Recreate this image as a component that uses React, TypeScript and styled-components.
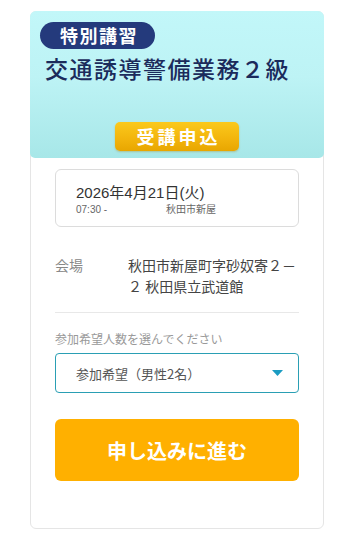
import React from "react";
import styled, { createGlobalStyle } from "styled-components";

const Global = createGlobalStyle`
  html, body { margin: 0; padding: 0; background: #fff; }
  body { font-family: "Liberation Sans", "Noto Sans CJK JP", sans-serif; }
`;

const Page = styled.div`
  padding: 11px 21px 12px 30px;
`;

const Card = styled.div`
  width: 292px;
  border: 1px solid #e5e5e5;
  border-radius: 6px;
  background: #fff;
  padding-bottom: 47px;
`;

const Header = styled.div`
  margin: -1px -1px 0;
  height: 147px;
  box-sizing: border-box;
  border-radius: 6px 6px 5px 5px;
  background: linear-gradient(180deg, #c2f7f9 0%, #bdf3f5 45%, #a7e7e8 100%);
  padding: 11px 0 7px 10px;
  display: flex;
  flex-direction: column;
  align-items: flex-start;
`;

const Badge = styled.div`
  height: 27px;
  box-sizing: border-box;
  padding: 0 17px 0 20px;
  border-radius: 14px;
  background: #243a7c;
  color: #fff;
  font-family: "Noto Sans CJK JP", sans-serif;
  font-weight: 700;
  font-size: 18px;
  letter-spacing: 1.5px;
  line-height: 27px;
`;

const Title = styled.h1`
  margin: 2px 0 0 5px;
  font-family: "Noto Sans CJK JP", sans-serif;
  font-weight: 500;
  font-size: 23px;
  letter-spacing: 1.5px;
  line-height: 34px;
  color: #1b2b5c;
`;

const ApplyRow = styled.div`
  margin-top: auto;
  align-self: stretch;
  display: flex;
  justify-content: center;
  padding-right: 10px;
`;

const ApplyButton = styled.div`
  width: 124px;
  height: 29px;
  border-radius: 5px;
  background: linear-gradient(180deg, #fbc91c 0%, #f2b40c 60%, #e8a600 100%);
  box-shadow: 0 1px 2px rgba(170, 120, 0, 0.35);
  color: #fff;
  font-family: "Noto Sans CJK JP", sans-serif;
  font-weight: 700;
  font-size: 18px;
  letter-spacing: 3px;
  line-height: 29px;
  text-align: center;
  text-indent: 3px;
`;

const Body = styled.div`
  padding: 11px 24px 0;
`;

const DateBox = styled.div`
  height: 58px;
  box-sizing: border-box;
  border: 1px solid #dcdcdc;
  border-radius: 6px;
  padding: 14px 20px 0;
`;

const DateText = styled.div`
  font-size: 15px;
  line-height: 18px;
  color: #333;
`;

const DateMeta = styled.div`
  display: flex;
  font-size: 10px;
  line-height: 14px;
  color: #666;
  margin-top: 1px;
`;

const Time = styled.span`
  width: 90px;
`;

const Venue = styled.div`
  display: flex;
  margin-top: 28px;
  padding-bottom: 15px;
  border-bottom: 1px solid #e8e8e8;
  font-family: "Noto Sans CJK JP", sans-serif;
  font-size: 14px;
  line-height: 21px;
`;

const VenueLabel = styled.div`
  width: 73px;
  flex-shrink: 0;
  color: #888;
`;

const VenueValue = styled.div`
  color: #444;
`;

const SelectLabel = styled.div`
  margin-top: 17px;
  font-family: "Noto Sans CJK JP", sans-serif;
  font-size: 12px;
  line-height: 18px;
  color: #999;
`;

const Select = styled.div`
  margin-top: 5px;
  height: 40px;
  box-sizing: border-box;
  border: 1px solid #2a9fb4;
  border-radius: 4px;
  display: flex;
  align-items: center;
  justify-content: space-between;
  padding: 0 15px 0 20px;
  font-family: "Noto Sans CJK JP", sans-serif;
  font-size: 13px;
  color: #555;
`;

const SubmitButton = styled.div`
  margin-top: 26px;
  height: 62px;
  border-radius: 6px;
  background: #ffb000;
  display: flex;
  align-items: center;
  justify-content: center;
  color: #fff;
  font-family: "Noto Sans CJK JP", sans-serif;
  font-weight: 700;
  font-size: 20px;
`;

export default function App() {
  return (
    <>
      <Global />
      <Page>
        <Card>
          <Header>
            <Badge>特別講習</Badge>
            <Title>交通誘導警備業務２級</Title>
            <ApplyRow>
              <ApplyButton>受講申込</ApplyButton>
            </ApplyRow>
          </Header>
          <Body>
            <DateBox>
              <DateText>2026年4月21日(火)</DateText>
              <DateMeta>
                <Time>07:30 -</Time>
                <span>秋田市新屋</span>
              </DateMeta>
            </DateBox>
            <Venue>
              <VenueLabel>会場</VenueLabel>
              <VenueValue>秋田市新屋町字砂奴寄２－２ 秋田県立武道館</VenueValue>
            </Venue>
            <SelectLabel>参加希望人数を選んでください</SelectLabel>
            <Select>
              <span>参加希望（男性2名）</span>
              <svg width="11" height="6" viewBox="0 0 11 6">
                <path d="M0 0 L11 0 L5.5 6 Z" fill="#1b9cc2" />
              </svg>
            </Select>
            <SubmitButton>申し込みに進む</SubmitButton>
          </Body>
        </Card>
      </Page>
    </>
  );
}
